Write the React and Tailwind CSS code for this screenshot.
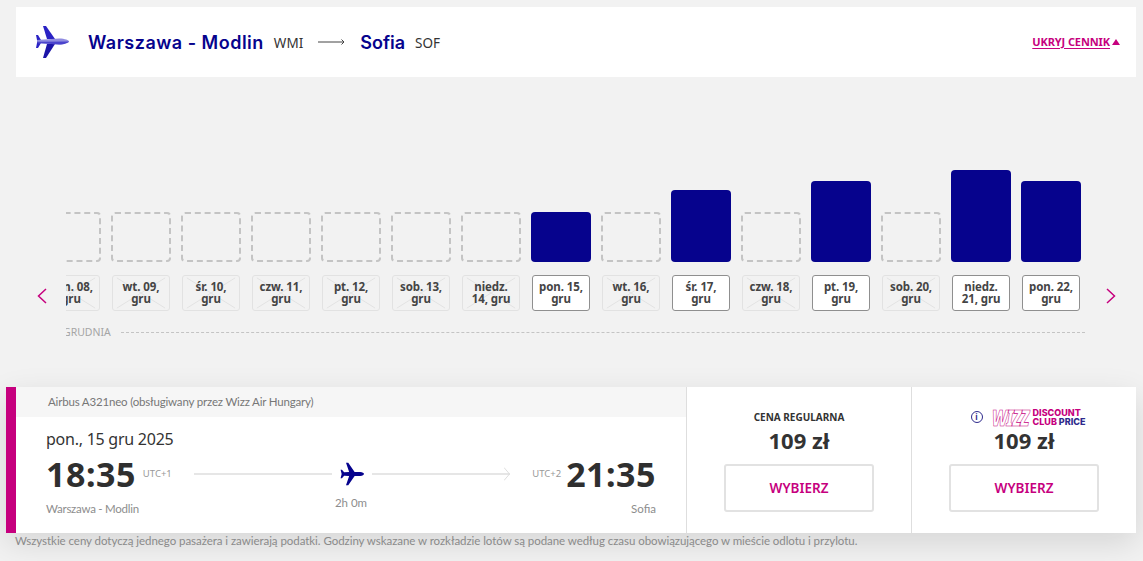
import React from 'react';

const days = [
  { label: 'pon. 08, gru' },
  { label: 'wt. 09, gru' },
  { label: 'śr. 10, gru' },
  { label: 'czw. 11, gru' },
  { label: 'pt. 12, gru' },
  { label: 'sob. 13, gru' },
  { label: 'niedz. 14, gru' },
  { label: 'pon. 15, gru', bar: 'h-[50px]' },
  { label: 'wt. 16, gru' },
  { label: 'śr. 17, gru', bar: 'h-[72px]' },
  { label: 'czw. 18, gru' },
  { label: 'pt. 19, gru', bar: 'h-[81px]' },
  { label: 'sob. 20, gru' },
  { label: 'niedz. 21, gru', bar: 'h-[92px]' },
  { label: 'pon. 22, gru', bar: 'h-[81px]' },
];

const Plane = ({ className }) => (
  <svg viewBox="0 0 32 32" className={className}>
    <path
      fill="currentColor"
      d="M8 1 L11 1 L19.5 13.2 L27 13.4 C30 13.6 32 15 32 16 C32 17 30 18.4 27 18.6 L19.5 18.8 L11 31 L8 31 L12.2 18.8 L5.5 18.4 L2.6 21.6 L0.8 21.6 L2.2 16 L0.8 10.4 L2.6 10.4 L5.5 13.6 L12.2 13.2 Z"
    />
  </svg>
);

const HeaderPlane = () => (
  <svg viewBox="0 0 34 34" className="w-[34px] h-[34px]">
    <path fill="#2a22c4" d="M8 1 L11 1 L20 14 L12 14 Z" />
    <path fill="#1c14a8" d="M12 19 L20 19 L11 33 L8 33 Z" />
    <path fill="#2a22c4" d="M1 10 L3 10 L6 15 L2 15 Z M2 18 L6 18 L3 23 L1 23 Z" />
    <path fill="#8f8be0" d="M2 15 L24 13.5 C30 13.6 34 15.4 34 16.5 C34 17.6 30 19.4 24 19.5 L2 18 Z" />
    <path fill="#4a43cc" d="M2 16.8 L34 16.5 C33 18 29 19.4 24 19.5 L2 18 Z" />
  </svg>
);

const Day = ({ label, bar }) => (
  <div className="w-[60px] shrink-0 flex flex-col">
    <div className="h-[92px] flex items-end">
      {bar ? (
        <div className={`w-full rounded-[4px] bg-[#06038d] ${bar}`} />
      ) : (
        <div className="w-full h-[50px] rounded-[4px] border-2 border-dashed border-[#c4c4c4]" />
      )}
    </div>
    <div
      className={`relative mt-[13px] mx-px h-[36px] rounded-[3px] border flex items-center justify-center text-center text-[11.5px] leading-[12px] font-bold px-[5px] ${
        bar ? 'bg-white border-[#8f8f8f] text-[#444]' : 'border-[#e2e2e2] text-[#444]'
      }`}
    >
      {!bar && (
        <svg className="absolute inset-0 w-full h-full" viewBox="0 0 58 36" preserveAspectRatio="none">
          <path d="M4 34 L54 2 M4 2 L54 34" stroke="#e2e2e2" strokeWidth="1" fill="none" />
        </svg>
      )}
      <span className="relative tracking-[-0.1px]">{label}</span>
    </div>
  </div>
);

const PriceCol = ({ children }) => (
  <div className="w-[225px] border-l border-[#dedede] flex flex-col items-center pt-[23px]">
    <div className="h-[14px] flex items-center justify-center">{children}</div>
    <div className="mt-[4px] text-[22px] leading-[24px] font-bold text-[#333]">109 zł</div>
    <button className="mt-[12px] w-[150px] h-[48px] border-2 border-[#e2e2e2] rounded-[3px] text-[13.5px] font-semibold text-[#c6007e]">
      WYBIERZ
    </button>
  </div>
);

const App = () => {
  return (
    <div className="h-[561px] overflow-hidden bg-[#f2f2f2] pt-[7px] text-[#333] font-['Noto_Sans',sans-serif]">
      {/* Route header */}
      <div className="ml-[16px] mr-[7px] h-[70px] bg-white flex items-center pl-[19px] pr-[16px]">
        <HeaderPlane />
        <span className="ml-[19px] text-[18px] tracking-[0.5px] font-semibold text-[#06038d] font-['Inter',sans-serif]">Warszawa - Modlin</span>
        <span className="ml-[10px] mt-[2px] text-[13.5px] text-[#333]">WMI</span>
        <svg viewBox="0 0 27 8" className="ml-[15px] w-[27px] h-[8px]">
          <path d="M0 4 H26 M23.5 1.5 L26 4 L23.5 6.5" stroke="#444" strokeWidth="1" fill="none" />
        </svg>
        <span className="ml-[15px] text-[18px] font-semibold text-[#06038d] font-['Inter',sans-serif]">Sofia</span>
        <span className="ml-[10px] mt-[2px] text-[13.5px] text-[#333]">SOF</span>
        <div className="ml-auto flex items-center gap-[2px] text-[#c6007e]">
          <span className="text-[11px] tracking-[-0.1px] font-bold underline underline-offset-2">UKRYJ CENNIK</span>
          <span className="w-0 h-0 border-x-[4px] border-x-transparent border-b-[6px] border-b-[#c6007e]" />
        </div>
      </div>

      {/* Price chart */}
      <div className="flex mt-[93px]">
        <div className="w-[66px] pl-[37px] pt-[118px] shrink-0">
          <svg viewBox="0 0 10 16" className="w-[10px] h-[16px]">
            <path d="M9 1 L1.5 8 L9 15" stroke="#c6007e" strokeWidth="1.5" fill="none" />
          </svg>
        </div>
        <div className="w-[1019px] shrink-0">
          <div className="flex justify-end gap-[10px] pr-[4px] overflow-hidden">
            {days.map((d) => (
              <Day key={d.label} label={d.label} bar={d.bar} />
            ))}
          </div>
          <div className="mt-[14px] flex items-center overflow-hidden">
            <span className="-ml-[3px] text-[10.5px] leading-[14px] text-[#a5a5a5]">GRUDNIA</span>
            <div className="ml-[10px] flex-1 border-t border-dashed border-[#c4c4c4]" />
          </div>
        </div>
        <div className="pl-[21px] pt-[118px]">
          <svg viewBox="0 0 10 16" className="w-[10px] h-[16px]">
            <path d="M1 1 L8.5 8 L1 15" stroke="#c6007e" strokeWidth="1.5" fill="none" />
          </svg>
        </div>
      </div>

      {/* Flight card */}
      <div className="ml-[6px] mr-[7px] mt-[48px] h-[146px] flex bg-white shadow-[0_10px_30px_rgba(0,0,0,0.12)]">
        <div className="w-[10px] bg-[#c6007e] shrink-0" />
        <div className="w-[670px] shrink-0 flex flex-col">
          <div className="h-[30px] bg-[#f6f6f6] pl-[32px] flex items-center font-['Lato',sans-serif] text-[11.5px] tracking-[-0.18px] text-[#777]">
            Airbus A321neo (obsługiwany przez Wizz Air Hungary)
          </div>
          <div className="px-[30px] pt-[11px]">
            <div className="text-[16px] tracking-[-0.25px] leading-[22px] text-[#333]">pon., 15 gru 2025</div>
            <div className="flex items-center h-[36px] mt-[6px]">
              <span className="text-[34px] tracking-[0.5px] font-bold leading-none text-[#2f2f2f]">18:35</span>
              <span className="ml-[7px] text-[9.5px] text-[#999]">UTC+1</span>
              <div className="flex-1 flex items-center mx-[22px]">
                <div className="flex-1 border-t-2 border-[#e6e6e6]" />
                <Plane className="w-[24px] h-[24px] mx-[8px] text-[#06038d]" />
                <div className="flex-1 border-t-2 border-[#e6e6e6] relative">
                  <svg viewBox="0 0 6 14" className="absolute right-0 -top-[8px] w-[6px] h-[14px]">
                    <path d="M0 0.5 L5.5 7 L0 13.5" stroke="#dedede" strokeWidth="1" fill="none" />
                  </svg>
                </div>
              </div>
              <span className="mr-[5px] text-[9.5px] text-[#999]">UTC+2</span>
              <span className="text-[34px] tracking-[0.5px] font-bold leading-none text-[#2f2f2f]">21:35</span>
            </div>
            <div className="grid grid-cols-3 font-['Lato',sans-serif] text-[11.5px] leading-[15px] text-[#8d8d8d]">
              <span className="mt-[9px] tracking-[-0.25px]">Warszawa - Modlin</span>
              <span className="text-center mt-[3px]">2h 0m</span>
              <span className="text-right mt-[9px]">Sofia</span>
            </div>
          </div>
        </div>
        <PriceCol>
          <span className="text-[10px] font-bold text-[#333]">CENA REGULARNA</span>
        </PriceCol>
        <PriceCol>
          <div className="flex items-center pl-[8px]">
            <span className="w-[12px] h-[12px] rounded-full border border-[#2e2a8c] text-[#2e2a8c] text-[8px] leading-[10px] text-center font-bold">i</span>
            <span className="ml-[9px] w-[37px] inline-block origin-left scale-x-[0.76] italic font-black text-[22px] leading-[18px] tracking-[-1.5px] text-transparent [-webkit-text-stroke:0.6px_#c6007e]">WIZZ</span>
            <span className="ml-[4px] flex flex-col text-[9px] leading-[9px] font-extrabold font-['Inter',sans-serif] text-[#c6007e]">
              <span>DISCOUNT</span>
              <span className="whitespace-nowrap">CLUB <span className="text-[#2e2a8c]">PRICE</span></span>
            </span>
          </div>
        </PriceCol>
      </div>

      <p className="ml-[15px] text-[11.5px] tracking-[-0.05px] leading-[16px] text-[#8a8a8a] font-['Lato',sans-serif] relative">
        Wszystkie ceny dotyczą jednego pasażera i zawierają podatki. Godziny wskazane w rozkładzie lotów są podane według czasu obowiązującego w mieście odlotu i przylotu.
      </p>
    </div>
  );
};

export default App;
